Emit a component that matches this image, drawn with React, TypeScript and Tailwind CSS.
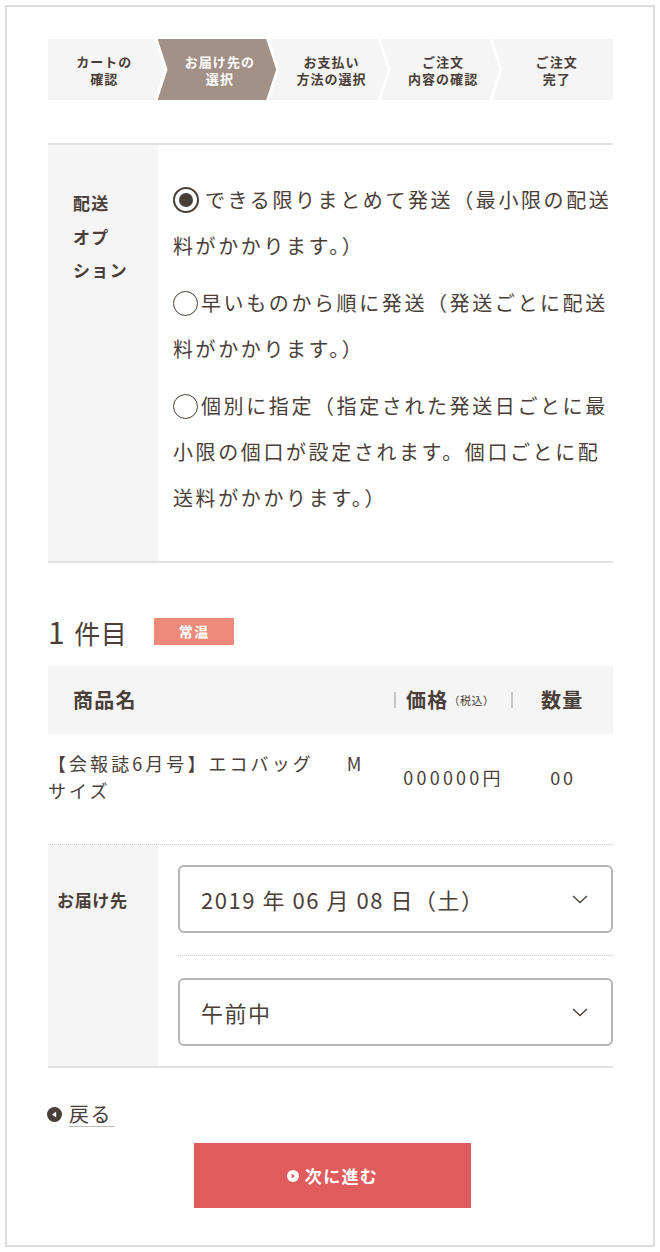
const steps = [
  ["カートの", "確認"],
  ["お届け先の", "選択"],
  ["お支払い", "方法の選択"],
  ["ご注文", "内容の確認"],
  ["ご注文", "完了"],
];

function Stepper() {
  return (
    <div className="flex h-[61px]">
      {steps.map((s, i) => {
        const active = i === 1;
        const clip =
          i === 0
            ? "[clip-path:polygon(0_0,calc(100%-10px)_0,100%_50%,calc(100%-10px)_100%,0_100%)]"
            : i === steps.length - 1
              ? "[clip-path:polygon(0_0,100%_0,100%_100%,0_100%,10px_50%)]"
              : "[clip-path:polygon(0_0,calc(100%-10px)_0,100%_50%,calc(100%-10px)_100%,0_100%,10px_50%)]";
        return (
          <div
            key={i}
            className={`flex flex-1 flex-col items-center justify-center text-[13px] font-bold leading-[17px] tracking-[0.08em] ${clip} ${
              i > 0 ? "-ml-[7px]" : ""
            } ${active ? "bg-[#a39087] text-white" : "bg-[#f5f5f5] text-[#4a3e38]"} ${
              i > 0 && i < steps.length - 1 ? "pl-[6px]" : i === 0 ? "pr-[4px]" : "pl-[8px]"
            }`}
          >
            <span>{s[0]}</span>
            <span>{s[1]}</span>
          </div>
        );
      })}
    </div>
  );
}

function Chevron() {
  return (
    <svg width="18" height="10" viewBox="0 0 18 10" fill="none" stroke="#4a3e38" strokeWidth="1.3">
      <path d="M2 2l7 6.5L16 2" />
    </svg>
  );
}

function Select({ value }: { value: string }) {
  return (
    <div className="flex h-[68px] items-center justify-between rounded-[6px] border-2 border-[#b8b4b2] bg-white pl-[21px] pr-[22px]">
      <span className="text-[22px] tracking-[0.07em] text-[#4a3e38]">{value}</span>
      <Chevron />
    </div>
  );
}

function Ring() {
  return (
    <span className="mr-[3px] inline-block h-[25px] w-[25px] rounded-full border-[1.5px] border-[#4a3e38] align-[-5px]" />
  );
}

export default function App() {
  return (
    <div
      className="bg-white text-[#4a3e38]"
      style={{ fontFamily: '"Noto Sans CJK JP", "Noto Sans", sans-serif' }}
    >
      <div className="mx-[5px] mt-[5px] h-[1242px] border-2 border-[#dcdcdc] pl-[41px] pr-[40px] pt-[32px]">
        <Stepper />

        {/* 配送オプション */}
        <div className="mt-[43px] flex border-y-2 border-[#e0e0e0]">
          <div className="w-[110px] shrink-0 bg-[#f5f5f5] pl-[25px] pt-[41px] text-[17px] font-bold leading-[33.5px] tracking-[0.08em]">
            配送
            <br />
            オプ
            <br />
            ション
          </div>
          <div className="flex-1 pb-[40px] pl-[15px] pt-[32px] text-[20px] leading-[46px] tracking-[0.13em] whitespace-nowrap">
            <p className="flex items-center">
              <span className="mr-[6px] flex h-[26px] w-[26px] items-center justify-center rounded-full border-2 border-[#4a3e38]">
                <span className="h-[14px] w-[14px] rounded-full bg-[#4a3e38]" />
              </span>
              できる限りまとめて発送（最小限の配送
            </p>
            <p>料がかかります。）</p>
            <p className="mt-[11px]">
              <Ring />
              早いものから順に発送（発送ごとに配送
            </p>
            <p>料がかかります。）</p>
            <p className="mt-[11px]">
              <Ring />
              個別に指定（指定された発送日ごとに最
            </p>
            <p>小限の個口が設定されます。個口ごとに配</p>
            <p>送料がかかります。）</p>
          </div>
        </div>

        {/* 1件目 */}
        <div className="mt-[53px] flex h-[30px] items-center">
          <h2 className="text-[26px] leading-none tracking-[0.02em]">
            <span className="mr-[9px] text-[30px]">1</span>件目
          </h2>
          <span className="ml-[27px] flex h-[27px] w-[80px] items-center justify-center bg-[#ec8b79] text-[14px] font-bold tracking-[0.1em] text-white">
            常温
          </span>
        </div>

        <div className="mt-[20px] flex h-[68px] items-center bg-[#f5f5f5] text-[20px] font-bold tracking-[0.06em]">
          <div className="flex-1 pl-[25px]">商品名</div>
          <div className="flex w-[119px] items-center">
            <span className="h-[16px] w-[2px] bg-[#c4c4c4]" />
            <span className="ml-[10px]">価格</span>
            <span className="text-[11px] font-normal tracking-[0.05em]">（税込）</span>
            <span className="ml-auto h-[16px] w-[2px] bg-[#c4c4c4]" />
          </div>
          <div className="w-[100px] pl-[28px]">数量</div>
        </div>

        <div className="flex items-center pb-[40px] pt-[16px] text-[18px] leading-[27px]">
          <div className="flex-1 tracking-[0.17em]">
            【会報誌6月号】エコバッグ　<span className="ml-[12px]">M</span>
            <br />
            サイズ
          </div>
          <div className="w-[119px] text-center tracking-[0.18em]">000000円</div>
          <div className="w-[100px] text-center tracking-[0.15em]">00</div>
        </div>

        {/* お届け先 */}
        <div className="flex border-b-2 border-t border-b-[#e0e0e0] border-t-[#cfcfcf] [border-top-style:dotted]">
          <div className="w-[110px] shrink-0 bg-[#f5f5f5] pl-[9px] pt-[43px] text-[17px] font-bold leading-[24px] tracking-[0.04em]">
            お届け先
          </div>
          <div className="flex-1 pb-[20px] pl-[20px] pt-[20px]">
            <Select value="2019 年 06 月 08 日（土）" />
            <div className="my-[22px] border-t border-dotted border-[#cfcfcf]" />
            <Select value="午前中" />
          </div>
        </div>

        {/* 戻る */}
        <div className="mt-[34px] flex items-center">
          <svg width="15" height="15" viewBox="0 0 16 16" className="-ml-[1px]">
            <circle cx="8" cy="8" r="8" fill="#4a3e38" />
            <path d="M9.8 4.8v6.4L5.4 8z" fill="#fff" />
          </svg>
          <span className="ml-[7px] border-b border-[#bdbdbd] pr-[3px] text-[20px] leading-[24px] tracking-[0.08em]">
            戻る
          </span>
        </div>

        <button className="ml-[146px] mt-[16px] flex h-[65px] w-[277px] items-center justify-center bg-[#df5b5c] text-[17px] font-bold tracking-[0.08em] text-white">
          <svg width="12" height="12" viewBox="0 0 16 16" className="mr-[6px]">
            <circle cx="8" cy="8" r="8" fill="#fff" />
            <path d="M6.2 4.8v6.4L10.6 8z" fill="#df5b5c" />
          </svg>
          次に進む
        </button>
      </div>
    </div>
  );
}
